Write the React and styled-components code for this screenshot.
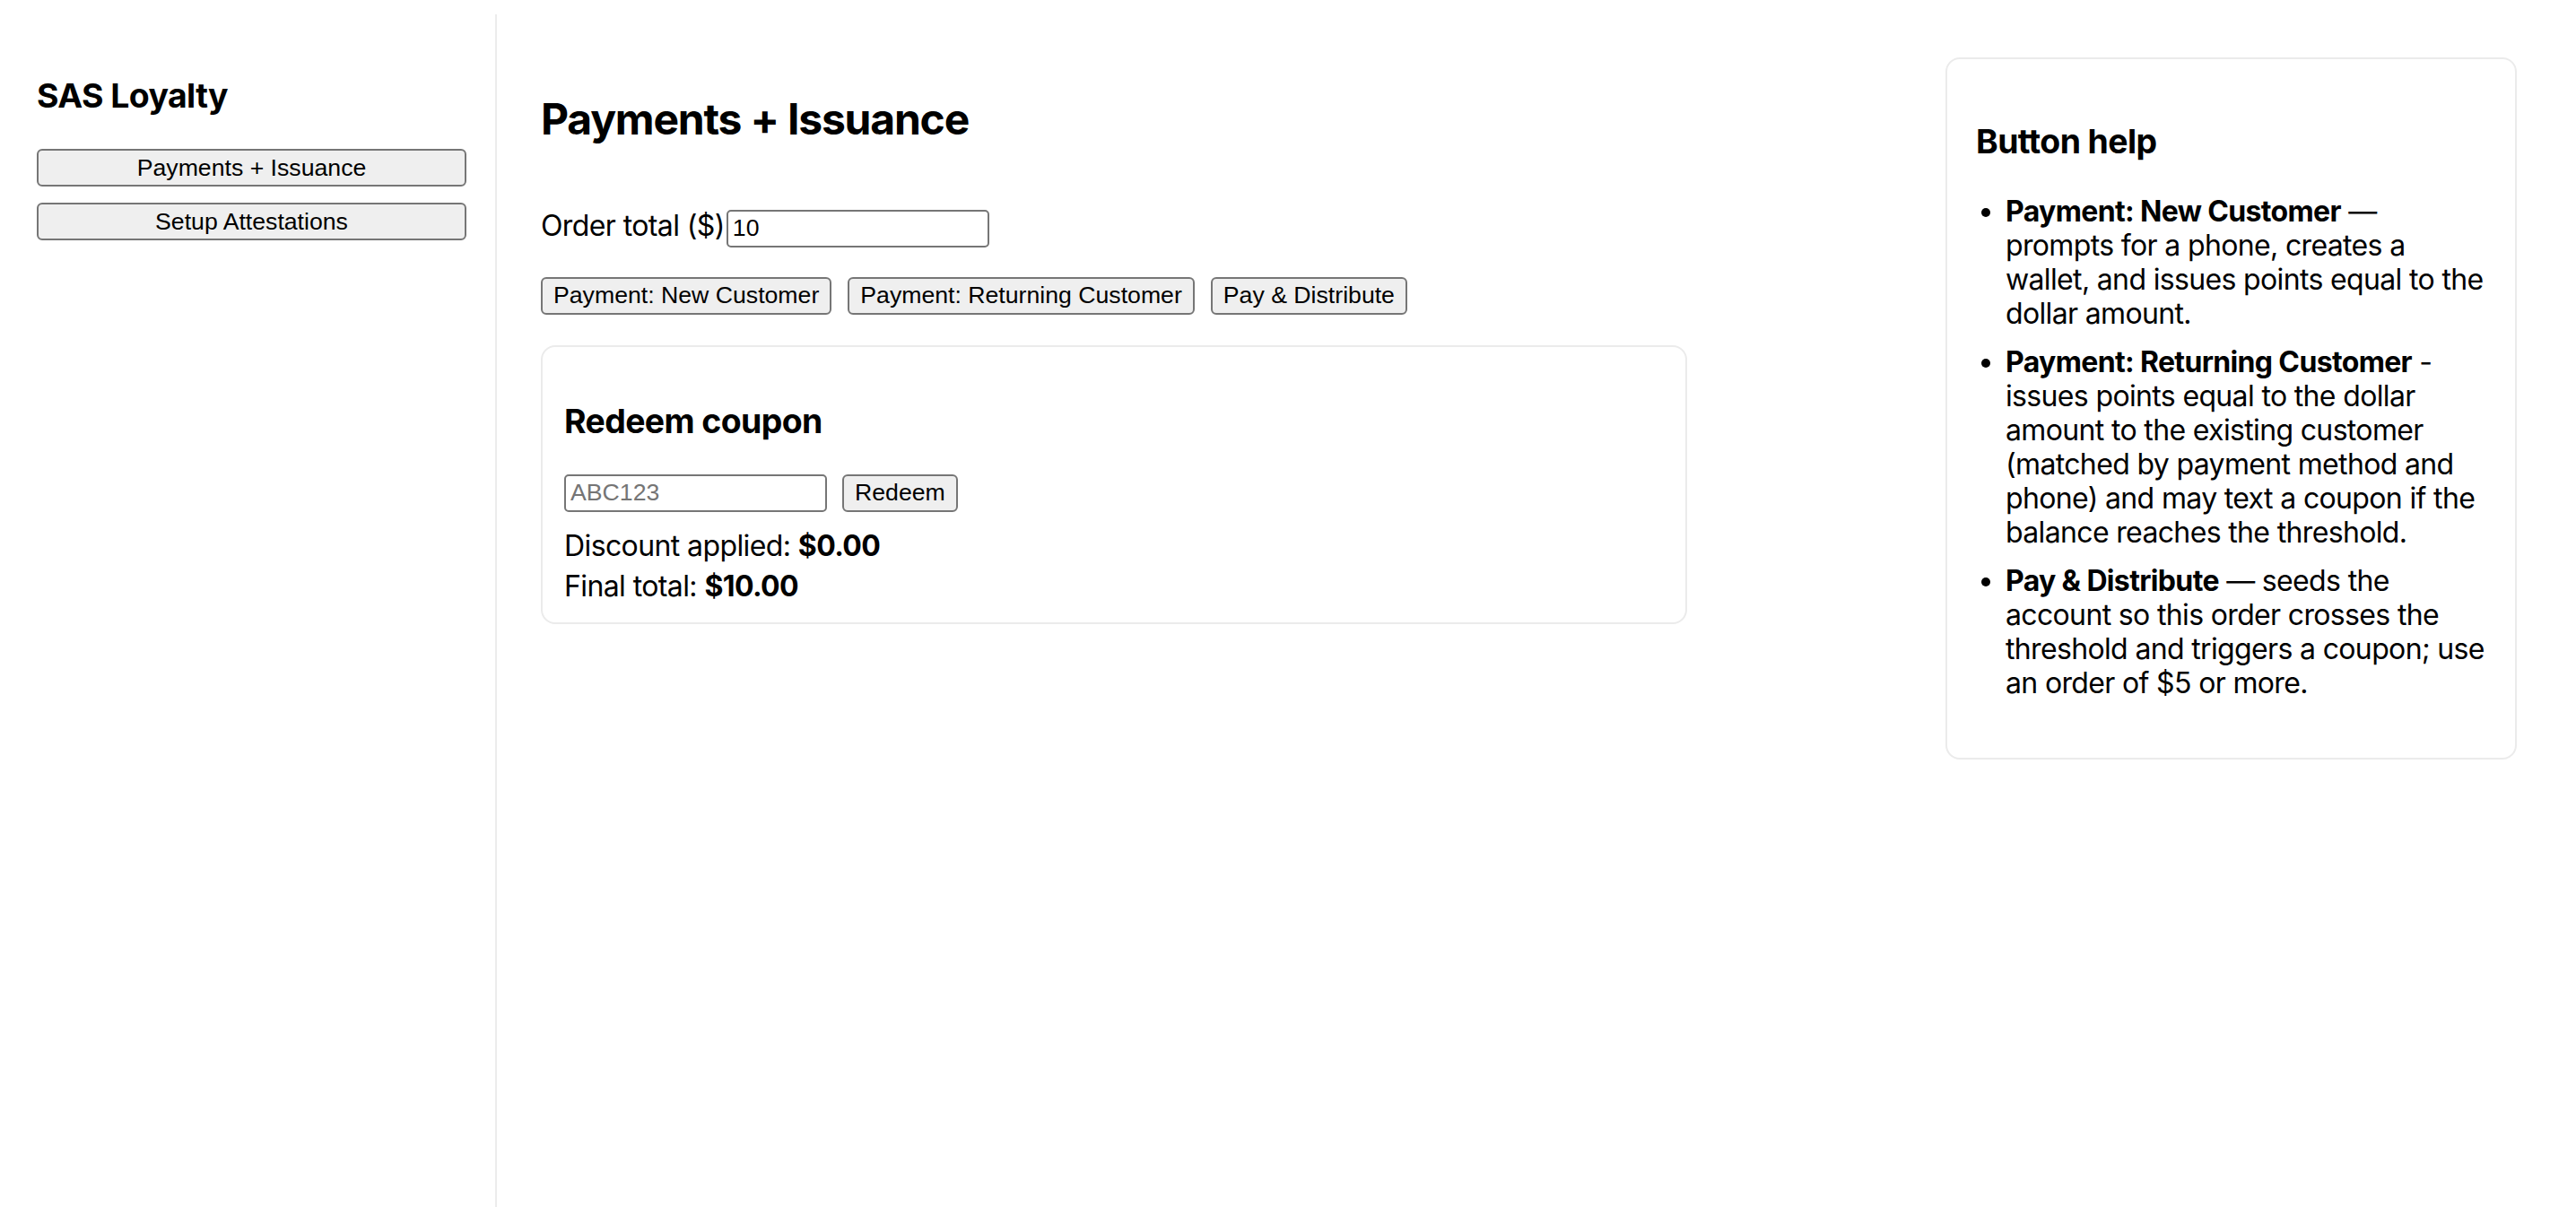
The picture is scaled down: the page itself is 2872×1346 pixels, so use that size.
import React from 'react'
import styled, { createGlobalStyle } from 'styled-components'

const GlobalStyle = createGlobalStyle`
  body {
    margin: 16px 16px 0;
    font-family: Inter, "Noto Sans", sans-serif;
    color: #000;
    background: #fff;
  }
`

export default function App() {
  return (
    <>
      <GlobalStyle />
      <Layout>
        <Sidebar>
          <Heading>SAS Loyalty</Heading>
          <NavButton>Payments + Issuance</NavButton>
          <NavButton>Setup Attestations</NavButton>
        </Sidebar>
        <Main>
          <Content>
            <Title>Payments + Issuance</Title>
            <OrderRow>
              <Label htmlFor="order-total">Order total ($)</Label>
              <TextInput id="order-total" defaultValue="10" />
            </OrderRow>
            <ButtonRow>
              <Button>Payment: New Customer</Button>
              <Button>Payment: Returning Customer</Button>
              <Button>Pay &amp; Distribute</Button>
            </ButtonRow>
            <Card>
              <Heading>Redeem coupon</Heading>
              <CouponRow>
                <TextInput placeholder="ABC123" />
                <Button>Redeem</Button>
              </CouponRow>
              <Line>
                Discount applied: <b>$0.00</b>
              </Line>
              <Line>
                Final total: <b>$10.00</b>
              </Line>
            </Card>
          </Content>
          <Help>
            <Heading>Button help</Heading>
            <HelpList>
              <li>
                <b>Payment: New Customer</b> — prompts for a phone, creates a wallet, and
                issues points equal to the dollar amount.
              </li>
              <li>
                <b>Payment: Returning Customer</b> - issues points equal to the dollar amount
                to the existing customer (matched by payment method and phone) and may text a
                coupon if the balance reaches the threshold.
              </li>
              <li>
                <b>Pay &amp; Distribute</b> — seeds the account so this order crosses the
                threshold and triggers a coupon; use an order of $5 or more.
              </li>
            </HelpList>
          </Help>
        </Main>
      </Layout>
    </>
  )
}

const Layout = styled.div`
  display: flex;
  min-height: calc(100vh - 16px);
`

const Sidebar = styled.aside`
  width: 538px;
  flex: none;
  box-sizing: border-box;
  padding: 31px 32px 0 25px;
  border-right: 2px solid #ececec;
`

const Heading = styled.h3`
  font-size: 37.4px;
  line-height: 45px;
  font-weight: 700;
  letter-spacing: -0.6px;
  margin: 37px 0;
`

const NavButton = styled.button`
  display: block;
  width: 100%;
  height: 42px;
  margin-bottom: 18px;
  font-family: "Liberation Sans", Arial, sans-serif;
  font-size: 26.67px;
  color: #000;
  background: #efefef;
  border: 2px solid #767676;
  border-radius: 6px;
  padding: 0 12px;
`

const Main = styled.main`
  flex: 1;
  display: flex;
  align-items: flex-start;
  gap: 48px;
  padding: 48px 50px 48px 49px;
`

const Content = styled.section`
  flex: 1;
  display: flex;
  flex-direction: column;
  align-items: flex-start;
`

const Title = styled.h2`
  font-size: 48px;
  line-height: 58px;
  font-weight: 700;
  letter-spacing: -1.2px;
  margin: 40px 0 0;
`

const OrderRow = styled.div`
  display: flex;
  align-items: baseline;
  gap: 2px;
  margin-top: 71px;
`

const Label = styled.label`
  font-size: 32px;
  line-height: 38px;
  letter-spacing: -0.6px;
`

const TextInput = styled.input`
  box-sizing: border-box;
  width: 293px;
  height: 42px;
  padding: 0 5px;
  font-family: "Liberation Sans", Arial, sans-serif;
  font-size: 26.67px;
  color: #000;
  border: 2px solid #767676;
  border-radius: 5px;
  background: #fff;
  &::placeholder {
    color: #757575;
  }
`

const ButtonRow = styled.div`
  display: flex;
  gap: 18px;
  margin-top: 33px;
`

const Button = styled.button`
  height: 42px;
  padding: 0 12px;
  font-family: "Liberation Sans", Arial, sans-serif;
  font-size: 26.67px;
  color: #000;
  background: #efefef;
  border: 2px solid #767676;
  border-radius: 6px;
`

const Card = styled.div`
  align-self: stretch;
  box-sizing: border-box;
  max-width: 1278px;
  margin-top: 34px;
  padding: 0 24px 21px;
  border: 2px solid #ebebeb;
  border-radius: 16px;
  & > h3 {
    margin-top: 60px;
  }
`

const CouponRow = styled.div`
  display: flex;
  gap: 17px;
  margin-bottom: 19px;
`

const Line = styled.div`
  font-size: 32px;
  line-height: 38px;
  letter-spacing: -0.6px;
  & + & {
    margin-top: 7px;
  }
`

const Help = styled.aside`
  width: 637px;
  flex: none;
  box-sizing: border-box;
  padding: 0 32px 32px;
  border: 2px solid #ebebeb;
  border-radius: 16px;
  & > h3 {
    margin-top: 69px;
  }
`

const HelpList = styled.ul`
  margin: 0 0 32px;
  padding-left: 33px;
  font-size: 32px;
  line-height: 38px;
  letter-spacing: -0.65px;
  li + li {
    margin-top: 16px;
  }
`
